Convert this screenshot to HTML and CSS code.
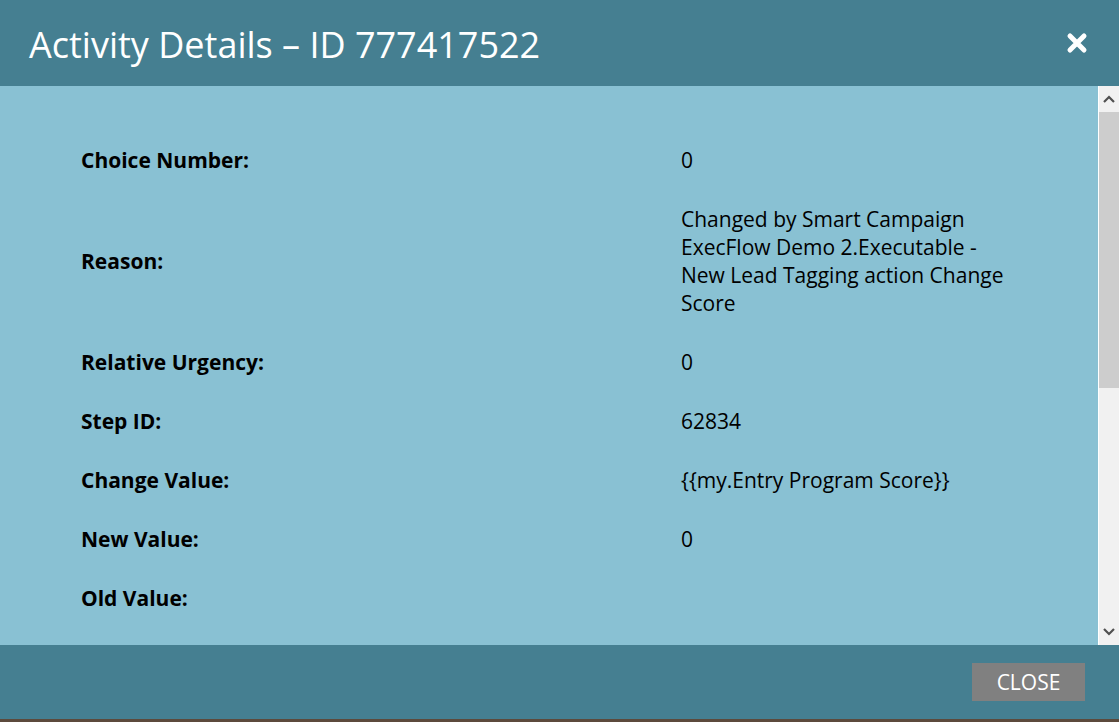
FILE: index.html
```html
<!DOCTYPE html>
<html>
<head>
<meta charset="utf-8">
<link rel="stylesheet" href="styles.css">
</head>
<body>
<div class="modal">
  <header class="modal-header">
    <h1 class="modal-title">Activity Details – ID 777417522</h1>
    <button class="close-x" aria-label="Close">
      <svg width="22" height="22" viewBox="0 0 22 22"><path d="M4 4 L18 18 M18 4 L4 18" stroke="#fff" stroke-width="5" stroke-linecap="round"/></svg>
    </button>
  </header>
  <div class="modal-body">
    <div class="scroll-content">
      <table class="details">
        <tr><th>Choice Number:</th><td>0</td></tr>
        <tr><th>Reason:</th><td>Changed by Smart Campaign ExecFlow Demo 2.Executable - New Lead Tagging action Change Score</td></tr>
        <tr><th>Relative Urgency:</th><td>0</td></tr>
        <tr><th>Step ID:</th><td>62834</td></tr>
        <tr><th>Change Value:</th><td>{{my.Entry Program Score}}</td></tr>
        <tr><th>New Value:</th><td>0</td></tr>
        <tr><th>Old Value:</th><td></td></tr>
      </table>
    </div>
    <div class="scrollbar">
      <div class="sb-btn"><svg width="12" height="8" viewBox="0 0 12 8"><path d="M1 7 L6 2 L11 7" stroke="#505050" stroke-width="2.2" fill="none"/></svg></div>
      <div class="sb-track"><div class="sb-thumb"></div></div>
      <div class="sb-btn"><svg width="12" height="8" viewBox="0 0 12 8"><path d="M1 1 L6 6 L11 1" stroke="#505050" stroke-width="2.2" fill="none"/></svg></div>
    </div>
  </div>
  <footer class="modal-footer">
    <button class="close-btn">CLOSE</button>
  </footer>
  <div class="under-strip"></div>
</div>
</body>
</html>
```

FILE: styles.css
```css
html, body {
  margin: 0;
  padding: 0;
  height: 100%;
  overflow: hidden;
}
body {
  font-family: "Open Sans", "DejaVu Sans", sans-serif;
}
.modal {
  display: flex;
  flex-direction: column;
  height: 722px;
  width: 1119px;
}
.modal-header {
  height: 86px;
  flex: none;
  background: #457f91;
  display: flex;
  align-items: center;
  justify-content: space-between;
  padding: 0 31px 0 29px;
}
.modal-title {
  margin: 0;
  color: #fff;
  font-weight: 400;
  font-size: 36px;
  line-height: 1;
  padding-top: 3px;
}
.close-x {
  background: none;
  border: 0;
  padding: 0;
  width: 22px;
  height: 22px;
  display: flex;
}
.modal-body {
  flex: 1;
  display: flex;
  background: #89c1d3;
  min-height: 0;
}
.scroll-content {
  flex: 1;
  overflow: hidden;
  padding: 44px 0 0 81px;
}
.details {
  border-collapse: collapse;
  font-size: 21px;
  line-height: 28px;
  color: #000;
}
.details th {
  text-align: left;
  font-weight: 700;
  width: 600px;
  padding: 15.5px 0 15.5px;
  vertical-align: middle;
}
.details td {
  width: 345px;
  padding: 15.5px 0 15.5px;
  vertical-align: middle;
}
.scrollbar {
  width: 20px;
  flex: none;
  border-left: 1px solid #fff;
  background: #f1f1f1;
  display: flex;
  flex-direction: column;
}
.sb-btn {
  height: 26px;
  display: flex;
  align-items: center;
  justify-content: center;
  flex: none;
}
.sb-track {
  flex: 1;
}
.sb-thumb {
  height: 276px;
  background: #cdcdcd;
}
.modal-footer {
  height: 74px;
  flex: none;
  background: #457f91;
  display: flex;
  justify-content: flex-end;
  align-items: flex-start;
  padding: 18px 34px 0 0;
  box-sizing: border-box;
}
.close-btn {
  width: 113px;
  height: 38px;
  background: #808080;
  border: 0;
  color: #fff;
  font-family: "Open Sans", "DejaVu Sans", sans-serif;
  font-size: 21px;
  padding: 0;
}
.under-strip {
  height: 3px;
  flex: none;
  background: #5c4a3c;
}
```
